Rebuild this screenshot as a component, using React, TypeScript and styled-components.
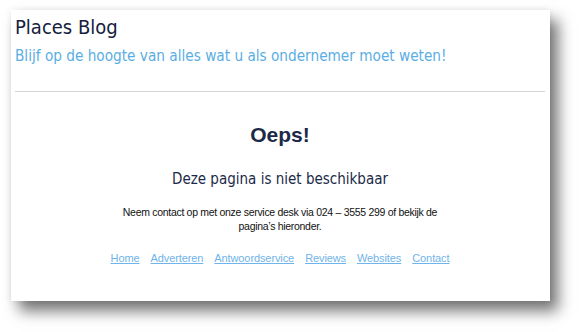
import React from "react";
import styled, { createGlobalStyle } from "styled-components";

const GlobalStyle = createGlobalStyle`
  html, body {
    margin: 0;
    padding: 0;
    background: #ffffff;
  }
  body {
    width: 584px;
    height: 332px;
    overflow: hidden;
  }
`;

const Stage = styled.div`
  padding: 10px 34px 31px 11px;
`;

const Card = styled.div`
  background: #ffffff;
  height: 291px;
  box-sizing: border-box;
  padding: 4px 5px 0 4px;
  box-shadow: 8px 10px 14px rgba(0, 0, 0, 0.55), 0 0 6px rgba(0, 0, 0, 0.08);
`;

const Header = styled.header`
  border-bottom: 1px solid #d4d4d4;
  padding-bottom: 25px;
`;

const Title = styled.h1`
  margin: 0;
  font-family: "DejaVu Sans Condensed", "DejaVu Sans", sans-serif;
  font-weight: normal;
  font-size: 20px;
  line-height: 26px;
  color: #14213d;
`;

const Tagline = styled.p`
  margin: 6px 0 0;
  font-family: "DejaVu Sans Condensed", "DejaVu Sans", sans-serif;
  font-size: 15.2px;
  line-height: 20px;
  color: #5aaee3;
`;

const Body = styled.main`
  display: flex;
  flex-direction: column;
  align-items: center;
  text-align: center;
  padding-top: 29px;
`;

const Heading = styled.h2`
  margin: 0;
  font-family: "Liberation Sans", Arial, sans-serif;
  font-weight: bold;
  font-size: 21px;
  line-height: 28px;
  color: #1c2a48;
`;

const SubHeading = styled.h3`
  margin: 20px 0 0;
  font-family: "DejaVu Sans Condensed", "DejaVu Sans", sans-serif;
  font-weight: normal;
  font-size: 15px;
  line-height: 20px;
  color: #1c2a48;
`;

const Message = styled.p`
  margin: 16px 0 0;
  width: 320px;
  font-family: "Liberation Sans", Arial, sans-serif;
  font-size: 10.5px;
  letter-spacing: -0.3px;
  line-height: 14px;
  color: #111111;
`;

const Nav = styled.nav`
  display: flex;
  gap: 11px;
  margin-top: 18px;
`;

const NavLink = styled.a`
  font-family: "Liberation Sans", Arial, sans-serif;
  font-size: 11px;
  letter-spacing: -0.1px;
  line-height: 14px;
  color: #6fb4ea;
  text-decoration: underline;
`;

const links = ["Home", "Adverteren", "Antwoordservice", "Reviews", "Websites", "Contact"];

const App: React.FC = () => (
  <>
    <GlobalStyle />
    <Stage>
      <Card>
        <Header>
          <Title>Places Blog</Title>
          <Tagline>Blijf op de hoogte van alles wat u als ondernemer moet weten!</Tagline>
        </Header>
        <Body>
          <Heading>Oeps!</Heading>
          <SubHeading>Deze pagina is niet beschikbaar</SubHeading>
          <Message>
            Neem contact op met onze service desk via 024 – 3555 299 of bekijk de pagina’s hieronder.
          </Message>
          <Nav>
            {links.map((l) => (
              <NavLink key={l} href="#">
                {l}
              </NavLink>
            ))}
          </Nav>
        </Body>
      </Card>
    </Stage>
  </>
);

export default App;
